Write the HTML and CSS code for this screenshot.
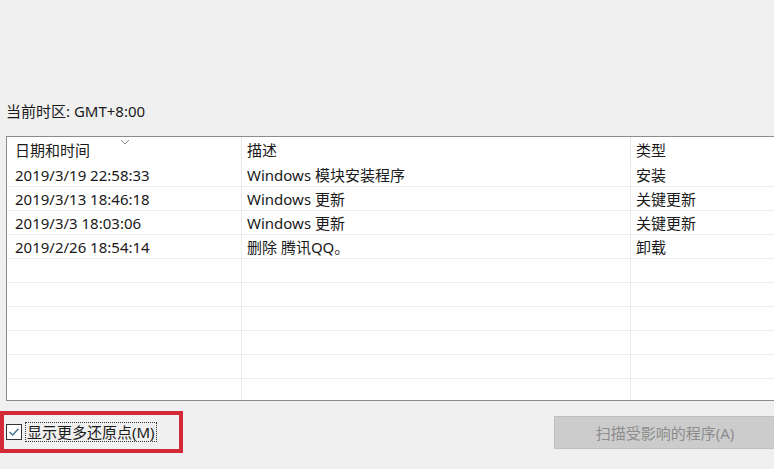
FILE: index.html
```html
<!DOCTYPE html>
<html lang="zh-CN">
<head>
    <meta charset="UTF-8">
    <meta name="viewport" content="width=device-width, initial-scale=1.0">
    <title>系统还原</title>
    <link rel="stylesheet" href="styles.css">
</head>
<body>
    <div class="restore-panel">
        <div class="timezone">当前时区: GMT+8:00</div>

        <div class="restore-list">
            <table class="points">
                <thead>
                    <tr>
                        <th class="col-date">
                            日期和时间
                            <svg class="sort-arrow" width="10" height="6" viewBox="0 0 10 6">
                                <polyline points="1,1 5,5 9,1" fill="none" stroke="#8a8a8a" stroke-width="1"/>
                            </svg>
                        </th>
                        <th class="col-desc">描述</th>
                        <th class="col-type">类型</th>
                    </tr>
                </thead>
                <tbody>
                    <tr><td>2019/3/19 22:58:33</td><td>Windows 模块安装程序</td><td>安装</td></tr>
                    <tr><td>2019/3/13 18:46:18</td><td>Windows 更新</td><td>关键更新</td></tr>
                    <tr><td>2019/3/3 18:03:06</td><td>Windows 更新</td><td>关键更新</td></tr>
                    <tr><td>2019/2/26 18:54:14</td><td>删除 腾讯QQ。</td><td>卸载</td></tr>
                    <tr class="empty"><td></td><td></td><td></td></tr>
                    <tr class="empty"><td></td><td></td><td></td></tr>
                    <tr class="empty"><td></td><td></td><td></td></tr>
                    <tr class="empty"><td></td><td></td><td></td></tr>
                    <tr class="empty"><td></td><td></td><td></td></tr>
                    <tr class="empty"><td></td><td></td><td></td></tr>
                </tbody>
            </table>
        </div>

        <div class="restore-footer">
            <div class="highlight">
                <label class="more-points">
                    <span class="check-box">
                        <svg width="14" height="14" viewBox="0 0 14 14">
                            <polyline points="2.5,7 5.6,10 11.5,3.8" fill="none" stroke="#3b6f8f" stroke-width="1.3"/>
                        </svg>
                    </span>
                    <span class="check-label">显示更多还原点(M)</span>
                </label>
            </div>
            <button class="scan-button" disabled>扫描受影响的程序(A)</button>
        </div>
    </div>
</body>
</html>
```

FILE: styles.css
```css
html, body {
    margin: 0;
    height: 100%;
    overflow: hidden;
}
body {
    background: #f0f0f0;
    color: #1a1a1a;
    font-family: "Noto Sans", "Noto Sans CJK SC", sans-serif;
    font-size: 15px;
}
.restore-panel {
    padding-top: 102px;
}
.timezone {
    line-height: 18px;
    padding-left: 6px;
}
.restore-list {
    margin: 16px 0 0 6px;
    width: 800px;
    height: 263px;
    background: #fff;
    border: 1px solid #8c8c8c;
    border-right: none;
    overflow: hidden;
}
.points {
    border-collapse: collapse;
    table-layout: fixed;
    width: 800px;
    line-height: 20px;
}
.points th {
    position: relative;
    height: 26px;
    padding: 0 0 0 5px;
    text-align: left;
    font-weight: normal;
    border-left: 1px solid #e5e5e5;
}
.points th:first-child,
.points td:first-child {
    padding-left: 8px;
    border-left: none;
}
.col-date {
    width: 226px;
}
.col-desc {
    width: 383px;
}
.sort-arrow {
    position: absolute;
    left: 113px;
    top: 2px;
}
.points td {
    height: 23px;
    padding: 0 0 0 5px;
    border-bottom: 1px solid #ededed;
    border-left: 1px solid #ebebeb;
    white-space: nowrap;
}
.restore-footer {
    display: flex;
    justify-content: space-between;
    align-items: center;
    margin-top: 10px;
}
.highlight {
    width: 173px;
    height: 34px;
    border: 4px solid #d22a36;
    display: flex;
    align-items: center;
    padding-left: 2px;
    box-sizing: content-box;
}
.more-points {
    display: flex;
    align-items: center;
    gap: 3px;
}
.check-box {
    width: 14px;
    height: 14px;
    border: 1px solid #333;
    background: #fff;
    display: flex;
}
.check-label {
    border: 1px dotted #333;
    padding: 0 1px;
    line-height: 18px;
}
.scan-button {
    width: 222px;
    height: 33px;
    margin-right: -2px;
    background: #cccccc;
    border: 1px solid #bfbfbf;
    color: #8d8d8d;
    font-family: inherit;
    font-size: 15px;
}
```
